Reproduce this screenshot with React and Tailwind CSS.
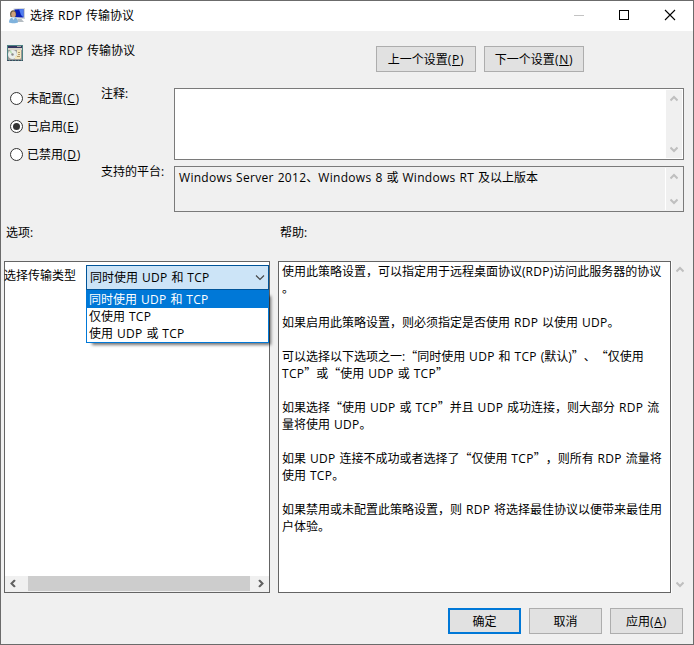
import { Fragment } from "react"

const helpLines = [
  "使用此策略设置，可以指定用于远程桌面协议(RDP)访问此服务器的协议",
  "。",
  "",
  "如果启用此策略设置，则必须指定是否使用 RDP 以使用 UDP。",
  "",
  "可以选择以下选项之一:“同时使用 UDP 和 TCP (默认)”、“仅使用",
  "TCP”或“使用 UDP 或 TCP”",
  "",
  "如果选择“使用 UDP 或 TCP”并且 UDP 成功连接，则大部分 RDP 流",
  "量将使用 UDP。",
  "",
  "如果 UDP 连接不成功或者选择了“仅使用 TCP”，则所有 RDP 流量将",
  "使用 TCP。",
  "",
  "如果禁用或未配置此策略设置，则 RDP 将选择最佳协议以便带来最佳用",
  "户体验。",
]

const transports = ["同时使用 UDP 和 TCP", "仅使用 TCP", "使用 UDP 或 TCP"]

const states = [
  { label: "未配置", hotkey: "C" },
  { label: "已启用", hotkey: "E", checked: true },
  { label: "已禁用", hotkey: "D" },
]

export default function App() {
  return (
    <div className="flex h-[645px] w-[694px] flex-col overflow-hidden border border-[#6b6b6b] bg-[#f0f0f0] font-['Open_Sans','Noto_Sans_CJK_SC',sans-serif] text-[12px] leading-[17px] text-black [text-spacing-trim:space-all]">
      <TitleBar />
      <header className="flex h-[57px] shrink-0 pl-[6px]">
        <PolicyIcon />
        <h1 className="mt-[11px] ml-2 w-[345px]">
          <Text>选择 RDP 传输协议</Text>
        </h1>
        <div className="mt-[15px] flex gap-2">
          <Button className="w-[100px]" label="上一个设置" hotkey="P" />
          <Button className="w-[100px]" label="下一个设置" hotkey="N" />
        </div>
      </header>

      <section className="flex h-[124px] shrink-0 pl-[9px]">
        <div className="flex w-[91px] flex-col gap-[11px] pt-[2px]">
          {states.map((s) => (
            <Radio key={s.hotkey} {...s} />
          ))}
        </div>
        <div className="flex w-[73px] flex-col">
          <span className="mt-[-3px] h-[78px]">注释:</span>
          <span>支持的平台:</span>
        </div>
        <div className="flex w-[510px] flex-col gap-[6px]">
          <div className="flex h-[72px] justify-end border border-[#7a7a7a] bg-white p-px">
            <VerticalScroll className="w-4 py-[5px]" />
          </div>
          <div className="flex h-[46px] justify-between border border-[#7a7a7a] p-px">
            <p className="pt-px pl-[3px]">
              <Text>Windows Server 2012、Windows 8 或 Windows RT 及以上版本</Text>
            </p>
            <VerticalScroll className="w-[17px] border-l border-white py-[5px]" />
          </div>
        </div>
      </section>

      <div className="flex h-[49px] shrink-0 pt-[12px] pl-[5px]">
        <span className="w-[274px]">选项:</span>
        <span>帮助:</span>
      </div>

      <main className="flex h-[332px] shrink-0 pl-[3px]">
        <OptionsPanel />
        <div className="ml-2 w-[393px] border border-[#646464] bg-white pt-px pl-[3px]">
          {helpLines.map((line, i) => (
            <p key={i} className="h-[17px] whitespace-pre">
              <Text>{line}</Text>
            </p>
          ))}
        </div>
        <VerticalScroll className="w-[17px] border-l border-white pt-[5px] pb-[5px]" />
      </main>

      <footer className="flex justify-end gap-2 pt-[15px] pr-[10px]">
        <Button className="w-[73px]" label="确定" primary />
        <Button className="w-[73px]" label="取消" />
        <Button className="w-[73px]" label="应用" hotkey="A" />
      </footer>
    </div>
  )
}

function TitleBar() {
  return (
    <div className="flex h-[30px] shrink-0 bg-white pl-2">
      <ComputerIcon />
      <span className="mt-[6px] ml-[4px] flex-1">
        <Text>选择 RDP 传输协议</Text>
      </span>
      <svg width="110" height="30" viewBox="0 0 110 30" className="mr-[11px]" shapeRendering="crispEdges" fill="none">
        <path d="M2 14.500h10" stroke="#c3c3c3" />
        <path d="M47.500 9.500h9v9h-9z" stroke="#000" />
        <path d="M93 9l10 10M103 9l-10 10" stroke="#000" strokeWidth="1.100" shapeRendering="auto" />
      </svg>
    </div>
  )
}

function OptionsPanel() {
  return (
    <div className="flex w-[266px] flex-col border border-[#646464] bg-white">
      <div className="flex flex-1 pt-[3px]">
        <span className="mt-[2px] -ml-[1px] w-[82px] whitespace-nowrap">选择传输类型</span>
        <div className="relative h-[25px] w-[183px] border border-[#005499] bg-[#cce4f7]">
          <div className="flex h-full items-center justify-between pr-[3px] pl-[3px]">
            <Text>{transports[0]}</Text>
            <svg width="10" height="7" viewBox="0 0 10 7" fill="none">
              <path d="M1 1.500l4 4 4-4" stroke="#444" strokeWidth="1.100" />
            </svg>
          </div>
          <ul className="absolute top-[24px] -left-px w-[183px] border border-[#0078d7] bg-white shadow-[4px_4px_3px_-2px_rgba(0,0,0,0.55)]">
            {transports.map((t, i) => (
              <li key={t} className={i === 0 ? "h-[17px] bg-[#0078d7] pl-[2px] text-white" : "h-[17px] pl-[2px]"}>
                <Text>{t}</Text>
              </li>
            ))}
          </ul>
        </div>
      </div>
      <div className="flex h-4 items-center bg-[#f0f0f0] pb-px">
        <Chevron className="ml-[4px] rotate-[-90deg] text-[#606060]" />
        <div className="ml-[11px] h-[15px] w-[222px] bg-[#cdcdcd]" />
        <Chevron className="ml-[7px] rotate-90 text-[#606060]" />
      </div>
    </div>
  )
}

function Button({ label, hotkey, primary, className }) {
  return (
    <button
      className={`flex h-[26px] items-center justify-center bg-[#e1e1e1] ${
        primary ? "border-2 border-[#0078d7]" : "border border-[#adadad]"
      } ${className}`}
    >
      <span>
        {label}
        <Hotkey char={hotkey} />
      </span>
    </button>
  )
}

function Radio({ label, hotkey, checked }) {
  return (
    <label className="flex h-[17px] items-center">
      <span className="flex size-[13px] items-center justify-center rounded-full border border-[#333] bg-white">
        {checked && <span className="size-[7px] rounded-full bg-[#333]" />}
      </span>
      <span className="ml-1">
        {label}
        <Hotkey char={hotkey} />
      </span>
    </label>
  )
}

function Hotkey({ char }) {
  if (!char) return null
  return (
    <span className="tracking-[0.7px]">
      (<span className="underline underline-offset-1">{char}</span>)
    </span>
  )
}

// Latin runs are set a little looser, quotes take the full-width Chinese glyphs
function Text({ children }) {
  return (
    <span className="whitespace-pre [word-spacing:0.8px]">
      {children.split(/([A-Za-z0-9]+|[“”]+)/).map((part, i) => {
        if (i % 2 === 0) return <Fragment key={i}>{part}</Fragment>
        const quote = part === "“" || part === "”"
        return (
          <span
            key={i}
            className={quote ? "font-['Noto_Sans_CJK_SC',sans-serif] leading-none" : "tracking-[0.3px]"}
          >
            {part}
          </span>
        )
      })}
    </span>
  )
}

function VerticalScroll({ className }) {
  return (
    <div className={`flex flex-col items-center justify-between bg-[#f0f0f0] text-[#bfbfbf] ${className}`}>
      <Chevron />
      <Chevron className="rotate-180" />
    </div>
  )
}

function Chevron({ className = "" }) {
  return (
    <svg width="8" height="7" viewBox="0 0 8 7" fill="none" className={className}>
      <path d="M0.500 5.500l3.500-3.500 3.500 3.500" stroke="currentColor" strokeWidth="2" />
    </svg>
  )
}

function ComputerIcon() {
  return (
    <svg width="17" height="16" viewBox="0 0 17 16" className="mt-[7px]">
      <path d="M4.500 0.500L16 0v11l-11.500-.5z" fill="#cfd4d6" />
      <path d="M5.500 1.500L14.500 1v8.500l-9-.5z" fill="#0a1fb4" />
      <path d="M10 1.300l4.500-.3v8.500L12 7z" fill="#4f7df0" />
      <path d="M8.500 11h4l2.500 3H8z" fill="#b4bcc2" />
      <path d="M1 6c0-5 6-5 6-.5v3L1.500 9z" fill="#6b5b45" />
      <ellipse cx="4.500" cy="6.300" rx="2.200" ry="2.900" fill="#d0a27c" />
      <path d="M0 14.500C0 7.500 9 7.500 9 14.500 7 15.500 2 15.500 0 14.500z" fill="#7fb2dc" />
      <path d="M3 9.500l1.500 2.500 1.500-2.500z" fill="#e4f1fa" />
    </svg>
  )
}

function PolicyIcon() {
  return (
    <svg width="16" height="16" viewBox="0 0 16 16" className="mt-[14px] shrink-0">
      <path d="M0 0h16v16H0z" fill="#4d8283" />
      <path d="M1 1h14v2H1z" fill="#33345e" />
      <path d="M10 1h4v1h-4z" fill="#a9a4a0" />
      <path d="M1 3h14v2H1z" fill="#d8d3c8" />
      <path d="M1 5h14v10H1z" fill="#9a9998" />
      <circle cx="5.500" cy="9.500" r="4.500" fill="#e9eeeb" />
      <path d="M5.500 9.500L2 6.500l2-1.300z" fill="#b6dfb0" />
      <circle cx="5.500" cy="9.500" r="1.200" fill="#8a8a8a" />
      <path d="M10 5h4v8l-1 1H8v-3h2z" fill="#f3e6bd" />
      <path d="M11 7.500h2M11 9.500h2M10 11.500h3" stroke="#a08658" strokeWidth="0.800" />
      <path d="M0 15.500h16" stroke="#3d4a5c" strokeDasharray="2 1" />
    </svg>
  )
}
